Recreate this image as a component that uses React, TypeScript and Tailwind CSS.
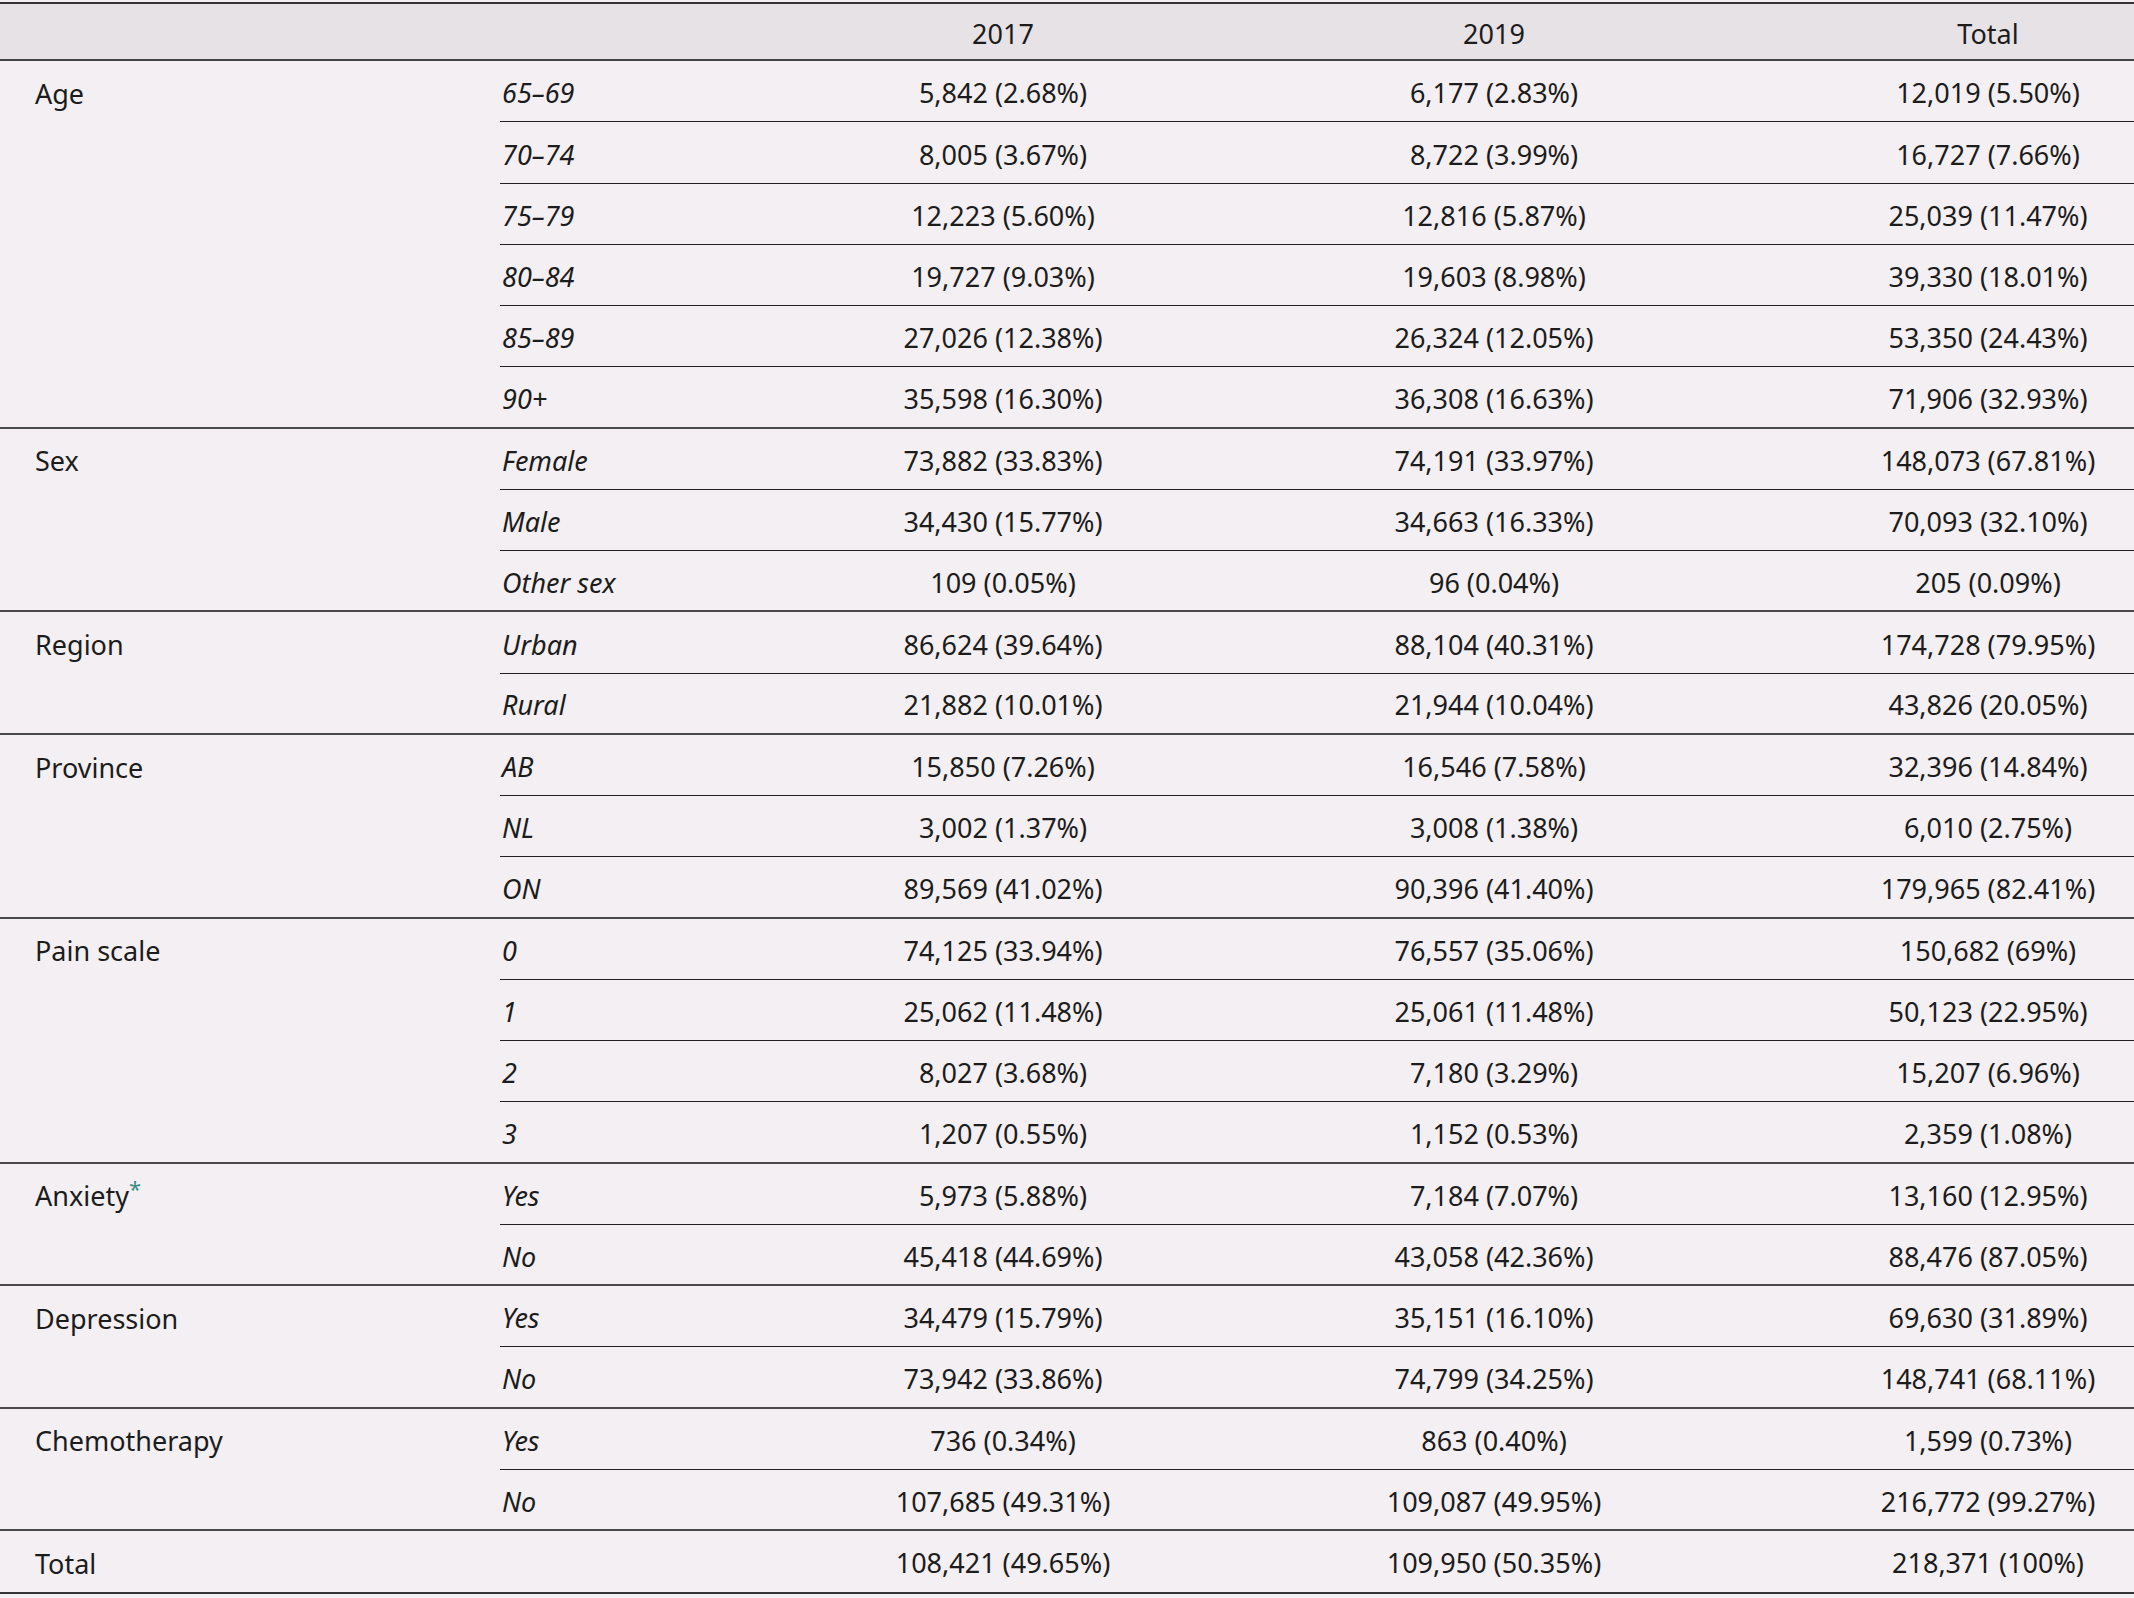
type Row = { sub: string; a: string; b: string; t: string };
type Group = { label: string; star?: boolean; rows: Row[] };

const groups: Group[] = [
  {
    label: "Age",
    rows: [
      { sub: "65–69", a: "5,842 (2.68%)", b: "6,177 (2.83%)", t: "12,019 (5.50%)" },
      { sub: "70–74", a: "8,005 (3.67%)", b: "8,722 (3.99%)", t: "16,727 (7.66%)" },
      { sub: "75–79", a: "12,223 (5.60%)", b: "12,816 (5.87%)", t: "25,039 (11.47%)" },
      { sub: "80–84", a: "19,727 (9.03%)", b: "19,603 (8.98%)", t: "39,330 (18.01%)" },
      { sub: "85–89", a: "27,026 (12.38%)", b: "26,324 (12.05%)", t: "53,350 (24.43%)" },
      { sub: "90+", a: "35,598 (16.30%)", b: "36,308 (16.63%)", t: "71,906 (32.93%)" },
    ],
  },
  {
    label: "Sex",
    rows: [
      { sub: "Female", a: "73,882 (33.83%)", b: "74,191 (33.97%)", t: "148,073 (67.81%)" },
      { sub: "Male", a: "34,430 (15.77%)", b: "34,663 (16.33%)", t: "70,093 (32.10%)" },
      { sub: "Other sex", a: "109 (0.05%)", b: "96 (0.04%)", t: "205 (0.09%)" },
    ],
  },
  {
    label: "Region",
    rows: [
      { sub: "Urban", a: "86,624 (39.64%)", b: "88,104 (40.31%)", t: "174,728 (79.95%)" },
      { sub: "Rural", a: "21,882 (10.01%)", b: "21,944 (10.04%)", t: "43,826 (20.05%)" },
    ],
  },
  {
    label: "Province",
    rows: [
      { sub: "AB", a: "15,850 (7.26%)", b: "16,546 (7.58%)", t: "32,396 (14.84%)" },
      { sub: "NL", a: "3,002 (1.37%)", b: "3,008 (1.38%)", t: "6,010 (2.75%)" },
      { sub: "ON", a: "89,569 (41.02%)", b: "90,396 (41.40%)", t: "179,965 (82.41%)" },
    ],
  },
  {
    label: "Pain scale",
    rows: [
      { sub: "0", a: "74,125 (33.94%)", b: "76,557 (35.06%)", t: "150,682 (69%)" },
      { sub: "1", a: "25,062 (11.48%)", b: "25,061 (11.48%)", t: "50,123 (22.95%)" },
      { sub: "2", a: "8,027 (3.68%)", b: "7,180 (3.29%)", t: "15,207 (6.96%)" },
      { sub: "3", a: "1,207 (0.55%)", b: "1,152 (0.53%)", t: "2,359 (1.08%)" },
    ],
  },
  {
    label: "Anxiety",
    star: true,
    rows: [
      { sub: "Yes", a: "5,973 (5.88%)", b: "7,184 (7.07%)", t: "13,160 (12.95%)" },
      { sub: "No", a: "45,418 (44.69%)", b: "43,058 (42.36%)", t: "88,476 (87.05%)" },
    ],
  },
  {
    label: "Depression",
    rows: [
      { sub: "Yes", a: "34,479 (15.79%)", b: "35,151 (16.10%)", t: "69,630 (31.89%)" },
      { sub: "No", a: "73,942 (33.86%)", b: "74,799 (34.25%)", t: "148,741 (68.11%)" },
    ],
  },
  {
    label: "Chemotherapy",
    rows: [
      { sub: "Yes", a: "736 (0.34%)", b: "863 (0.40%)", t: "1,599 (0.73%)" },
      { sub: "No", a: "107,685 (49.31%)", b: "109,087 (49.95%)", t: "216,772 (99.27%)" },
    ],
  },
  {
    label: "Total",
    rows: [{ sub: "", a: "108,421 (49.65%)", b: "109,950 (50.35%)", t: "218,371 (100%)" }],
  },
];

export default function App() {
  return (
    <div
      className="w-[2134px] min-h-[1598px] bg-[#f3eff2] pt-[2px] text-[27px] text-[#1c1c1c]"
      style={{ fontFamily: '"Noto Sans", "Open Sans", sans-serif' }}
    >
      <div className="border-t-2 border-b-2 border-[#333]">
        {/* header */}
        <div className="grid grid-cols-[500px_360px_286px_696px_292px] h-[57px] items-center pt-[6px] bg-[#e7e2e6] border-b-2 border-[#444]">
          <div />
          <div />
          <div className="text-center">2017</div>
          <div className="text-center">2019</div>
          <div className="text-center">Total</div>
        </div>

        {/* body */}
        {groups.map((g, gi) => (
          <div
            key={g.label}
            className={
              gi < groups.length - 1
                ? "grid grid-cols-[500px_1fr] border-b-2 border-[#4a4a4a]"
                : "grid grid-cols-[500px_1fr]"
            }
          >
            <div className="h-[61.25px] flex items-center pt-[5px] pl-[35px]">
              {g.label}
              {g.star && <sup className="text-[#3c8c88] text-[22px] top-[-0.4em]">*</sup>}
            </div>
            <div>
              {g.rows.map((r, ri) => (
                <div
                  key={ri}
                  className={
                    ri < g.rows.length - 1
                      ? "grid grid-cols-[360px_286px_696px_292px] h-[61.25px] items-center pt-[5px] border-b border-[#222]"
                      : "grid grid-cols-[360px_286px_696px_292px] h-[59.25px] items-center pt-[5px]"
                  }
                >
                  <div className="pl-[2px] italic">{r.sub}</div>
                  <div className="text-center whitespace-nowrap">{r.a}</div>
                  <div className="text-center whitespace-nowrap">{r.b}</div>
                  <div className="text-center whitespace-nowrap">{r.t}</div>
                </div>
              ))}
            </div>
          </div>
        ))}
      </div>
    </div>
  );
}
